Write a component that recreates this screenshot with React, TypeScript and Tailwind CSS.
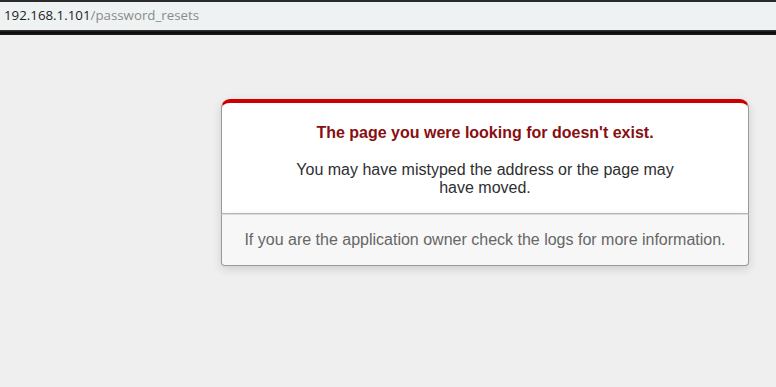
export default function App() {
  return (
    <div className="flex min-h-[387px] w-[776px] flex-col bg-[#efefef] font-['Liberation_Sans',Arial,sans-serif]">
      <div className="h-[2px] bg-[#2a2a2a]" />
      <div className="flex h-[28px] items-center bg-[#eff2f2] pl-[4px] font-['Open_Sans','DejaVu_Sans',sans-serif] text-[13.3px] leading-none">
        <span className="text-[#1e1e1e]">192.168.1.101</span>
        <span className="text-[#8a8c88]">/password_resets</span>
      </div>
      <div className="h-[5px] bg-gradient-to-b from-[#3a3a3a] via-[#0c0c0c] to-[#1c1c1c]" />
      <div className="flex-1 bg-[#efefef] text-center text-[16px] text-[#2e2f30]">
        <div className="ml-[221px] mt-[64px] w-[528px]">
          <div className="rounded-t-[9px] border border-b-[#bbb] border-l-[#999] border-r-[#999] border-t-[4px] border-t-[#cc0000] bg-white px-[63px] pt-[7px] shadow-[0_3px_8px_rgba(50,50,50,0.17)]">
            <h1 className="my-[10.7px] text-[16px] font-bold leading-[24px] text-[#870f12]">
              The page you were looking for doesn't exist.
            </h1>
            <p className="my-[16px] leading-[18px]">
              You may have mistyped the address or the page may have moved.
            </p>
          </div>
          <p className="mb-[16px] rounded-b-[4px] border border-b-[#999] border-l-[#999] border-r-[#999] border-t-[#dadada] bg-[#f7f7f7] p-[16px] leading-[18px] text-[#666] shadow-[0_3px_8px_rgba(50,50,50,0.17)]">
            If you are the application owner check the logs for more information.
          </p>
        </div>
      </div>
    </div>
  );
}
